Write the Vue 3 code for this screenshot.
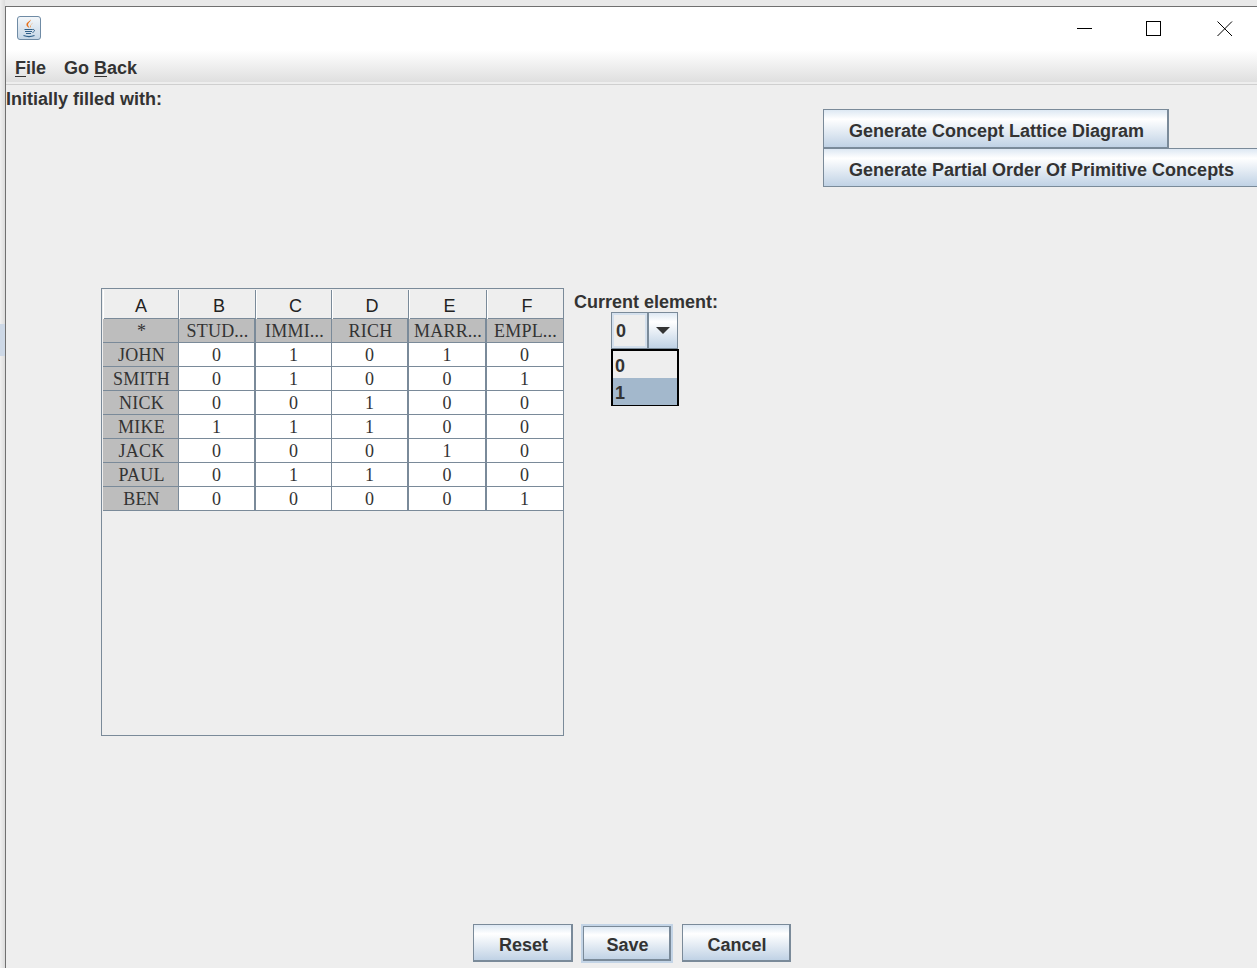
<script setup>
const columns = ["A", "B", "C", "D", "E", "F"];
const heads = ["*", "STUD...", "IMMI...", "RICH", "MARR...", "EMPL..."];
const rows = [
  ["JOHN", 0, 1, 0, 1, 0],
  ["SMITH", 0, 1, 0, 0, 1],
  ["NICK", 0, 0, 1, 0, 0],
  ["MIKE", 1, 1, 1, 0, 0],
  ["JACK", 0, 0, 0, 1, 0],
  ["PAUL", 0, 1, 1, 0, 0],
  ["BEN", 0, 0, 0, 0, 1],
];
</script>

<template>
  <div class="desktop">
    <div class="edge">
      <div class="edge-mark"></div>
    </div>
    <div class="window">
      <div class="titlebar">
        <div class="app-icon">
          <svg width="24" height="24" viewBox="0 0 24 24">
            <defs>
              <linearGradient id="iconBg" x1="0" y1="0" x2="0" y2="1">
                <stop offset="0" stop-color="#f4f7fa" />
                <stop offset="1" stop-color="#c5d6e6" />
              </linearGradient>
            </defs>
            <rect x="0.5" y="0.5" width="23" height="23" rx="2.5" fill="url(#iconBg)" stroke="#6f8ba5" />
            <path d="M13.500 3.500c.8 2.200-3.200 3.400-2.300 6 .4 1 1 1.500 1.300 2.500-2-.8-3.500-2.200-3-4.200.4-1.800 3.400-2.300 4-4.300z" fill="#e8701a" />
            <path d="M15.500 6.500c.2 1.800-2.300 2.300-1.700 4.300l-.6 1c-1-2.200 1.700-3.400 2.300-5.300z" fill="#f0923a" />
            <path d="M7.500 13.500h8M8 15.500h7M9 17.500h5" stroke="#2f5f88" stroke-width="1.100" fill="none" />
            <path d="M15.500 13.500c2.500-.5 2.800 2 0 3" stroke="#2f5f88" stroke-width="1" fill="none" />
            <path d="M6.500 19.500c3 1.200 8 1.200 11 0" stroke="#2f5f88" stroke-width="1.100" fill="none" />
          </svg>
        </div>
        <div class="win-controls">
          <svg class="win-min" width="16" height="16" viewBox="0 0 16 16"><path d="M0 7.500h15" stroke="#000" fill="none" /></svg>
          <svg width="16" height="16" viewBox="0 0 16 16"><rect x="0.500" y="0.500" width="14" height="14" stroke="#000" fill="none" /></svg>
          <svg width="16" height="16" viewBox="0 0 16 16"><path d="M0.500 0.500l14.500 14.500M15 0.500l-14.500 14.500" stroke="#000" fill="none" /></svg>
        </div>
      </div>

      <div class="menubar">
        <span class="menu"><u>F</u>ile</span>
        <span class="menu">Go <u>B</u>ack</span>
      </div>

      <div class="content">
        <div class="top-row">
          <div class="filled-label">Initially filled with:</div>
          <div class="generate">
            <button class="btn gen-one">Generate Concept Lattice Diagram</button>
            <button class="btn gen-two">Generate Partial Order Of Primitive Concepts</button>
          </div>
        </div>

        <div class="middle">
          <div class="table-box">
            <div class="grid col-heads">
              <div v-for="c in columns" :key="c" class="col-head">{{ c }}</div>
            </div>
            <div class="grid">
              <div v-for="h in heads" :key="h" class="cell gray">{{ h }}</div>
            </div>
            <div v-for="r in rows" :key="r[0]" class="grid">
              <div
                v-for="(v, i) in r"
                :key="i"
                class="cell"
                :class="{ gray: i === 0 }"
              >{{ v }}</div>
            </div>
          </div>

          <div class="element">
            <div class="element-label">Current element:</div>
            <div class="combo">
              <div class="combo-value">0</div>
              <div class="combo-arrow"><span class="triangle"></span></div>
            </div>
            <div class="popup">
              <div class="option">0</div>
              <div class="option selected">1</div>
            </div>
          </div>
        </div>

        <div class="actions">
          <button class="btn act reset">Reset</button>
          <div class="focus-ring"><button class="btn act save">Save</button></div>
          <button class="btn act cancel">Cancel</button>
        </div>
      </div>
    </div>
  </div>
</template>

<style>
html,
body {
  margin: 0;
  background: #eeeeee;
}
</style>

<style scoped>
.desktop {
  display: flex;
  width: 1257px;
  height: 968px;
  overflow: hidden;
  background: #e9e9e9;
  font-family: "Liberation Sans", Arial, sans-serif;
  color: #333333;
}
.edge {
  width: 5px;
  padding-top: 324px;
  background: linear-gradient(to right, #f0f0f0, #dcdcdc);
  flex-shrink: 0;
}
.edge-mark {
  height: 32px;
  background: #cdd8e6;
}
.window {
  flex: 1;
  min-width: 0;
  margin-top: 6px;
  border-top: 1px solid #707070;
  border-left: 1px solid #707070;
  display: flex;
  flex-direction: column;
  background: #eeeeee;
}
.titlebar {
  height: 43px;
  flex-shrink: 0;
  display: flex;
  justify-content: space-between;
  background: #ffffff;
  padding: 9px 24px 0 11px;
  box-sizing: border-box;
}
.app-icon {
  height: 24px;
}
.win-controls {
  display: flex;
  gap: 55px;
  padding-top: 5px;
}
.win-controls svg {
  display: block;
}
.win-min {
  margin-right: -2px;
}
.menubar {
  height: 32px;
  flex-shrink: 0;
  box-sizing: border-box;
  display: flex;
  gap: 18px;
  padding: 7px 0 0 9px;
  margin-bottom: 2px;
  background: linear-gradient(to bottom, #ffffff, #dfdfdf);
  font-size: 18px;
  font-weight: 700;
  line-height: 22px;
}
.menu u {
  text-underline-offset: 2px;
}
.content {
  flex: 1;
  min-height: 0;
  display: flex;
  flex-direction: column;
  border-top: 1px solid #cfcfcf;
}
.top-row {
  display: flex;
  justify-content: space-between;
  height: 203px;
}
.filled-label {
  font-size: 18px;
  font-weight: 700;
  line-height: 22px;
  margin-top: 3px;
}
.generate {
  display: flex;
  flex-direction: column;
  align-items: flex-start;
  width: 434px;
  padding-top: 24px;
}
.btn {
  display: block;
  box-sizing: border-box;
  margin: 0;
  font-family: inherit;
  font-size: 18px;
  font-weight: 700;
  color: #333333;
  border: 1px solid #7a8a99;
  background: linear-gradient(to bottom, #dde8f3 0%, #ffffff 25%, #c0d2e5 100%);
  padding: 0;
  white-space: nowrap;
}
.gen-one {
  width: 346px;
  height: 40px;
  padding: 4px 24px 0 25px;
  text-align: left;
  border-right-width: 2px;
  border-bottom-width: 2px;
  line-height: 22px;
}
.gen-two {
  width: 434px;
  height: 39px;
  padding: 5px 0 0 25px;
  text-align: left;
  margin-top: -1px;
  border-right: none;
}
.middle {
  display: flex;
  align-items: flex-start;
  height: 636px;
  padding-left: 95px;
}
.table-box {
  width: 463px;
  height: 448px;
  box-sizing: border-box;
  border: 1px solid #7a8a99;
  padding: 1px 0 0 1px;
  background: #eeeeee;
  flex-shrink: 0;
}
.grid {
  display: grid;
  grid-template-columns: 76px 77px 76px 77px 78px 76px;
}
.col-heads {
  height: 28px;
  border-bottom: 1px solid #7a8a99;
}
.col-head {
  font-size: 18px;
  line-height: 32px;
  text-align: center;
  color: #222222;
  border-right: 1px solid #7a8a99;
  box-shadow: inset 1px 0 0 #ffffff;
  padding-left: 4px;
}
.col-head:first-child {
  padding-left: 1px;
}
.col-head:last-child {
  border-right: none;
}
.cell {
  height: 24px;
  box-sizing: border-box;
  border-right: 1px solid #7a8a99;
  border-bottom: 1px solid #7a8a99;
  font-family: "Liberation Serif", "Times New Roman", serif;
  font-size: 18px;
  line-height: 24px;
  text-align: center;
  white-space: nowrap;
  background: #ffffff;
  color: #333333;
}
.cell.gray {
  background: #bdbdbd;
  padding-left: 2px;
  letter-spacing: 0.2px;
}
.cell:nth-child(2),
.cell:nth-child(4),
.cell:nth-child(5) {
  border-right-width: 2px;
}
.cell:last-child {
  border-right: none;
  padding-right: 1px;
}
.element {
  width: 150px;
  margin-left: 10px;
  padding-top: 3px;
}
.element-label {
  font-size: 18px;
  font-weight: 700;
  line-height: 22px;
}
.combo {
  display: flex;
  width: 67px;
  height: 37px;
  margin: -1px 0 0 37px;
  box-sizing: border-box;
  border: 1px solid #7a8a99;
}
.combo-value {
  flex: 1;
  font-size: 18px;
  font-weight: 700;
  line-height: 37px;
  padding-left: 4px;
  background: #eeeeee;
  box-shadow: inset 0 0 0 2px #d4e0ed;
}
.combo-arrow {
  width: 28px;
  border-left: 2px solid #7a8a99;
  display: flex;
  align-items: center;
  justify-content: center;
  background: linear-gradient(to bottom, #dde8f3 0%, #ffffff 25%, #c0d2e5 100%);
}
.triangle {
  width: 0;
  height: 0;
  border-left: 7px solid transparent;
  border-right: 7px solid transparent;
  border-top: 7px solid #333333;
}
.popup {
  width: 68px;
  height: 57px;
  box-sizing: border-box;
  margin-left: 37px;
  border: 2px solid #000000;
}
.option {
  height: 27px;
  font-size: 18px;
  font-weight: 700;
  line-height: 30px;
  padding-left: 2px;
  background: #eeeeee;
}
.option.selected {
  background: #a3b8cc;
}
.actions {
  display: flex;
  align-items: flex-start;
  padding-left: 467px;
}
.act {
  height: 38px;
  padding-top: 4px;
  border-right-width: 2px;
  border-bottom-width: 2px;
  line-height: 22px;
}
.reset {
  width: 100px;
  padding-left: 2px;
}
.focus-ring {
  margin-left: 8px;
  padding: 2px;
  background: #c3d4e6;
}
.save {
  width: 88px;
  height: 35px;
  padding-top: 3px;
  padding-left: 2px;
}
.cancel {
  width: 109px;
  margin-left: 9px;
  padding-left: 2px;
}
</style>
